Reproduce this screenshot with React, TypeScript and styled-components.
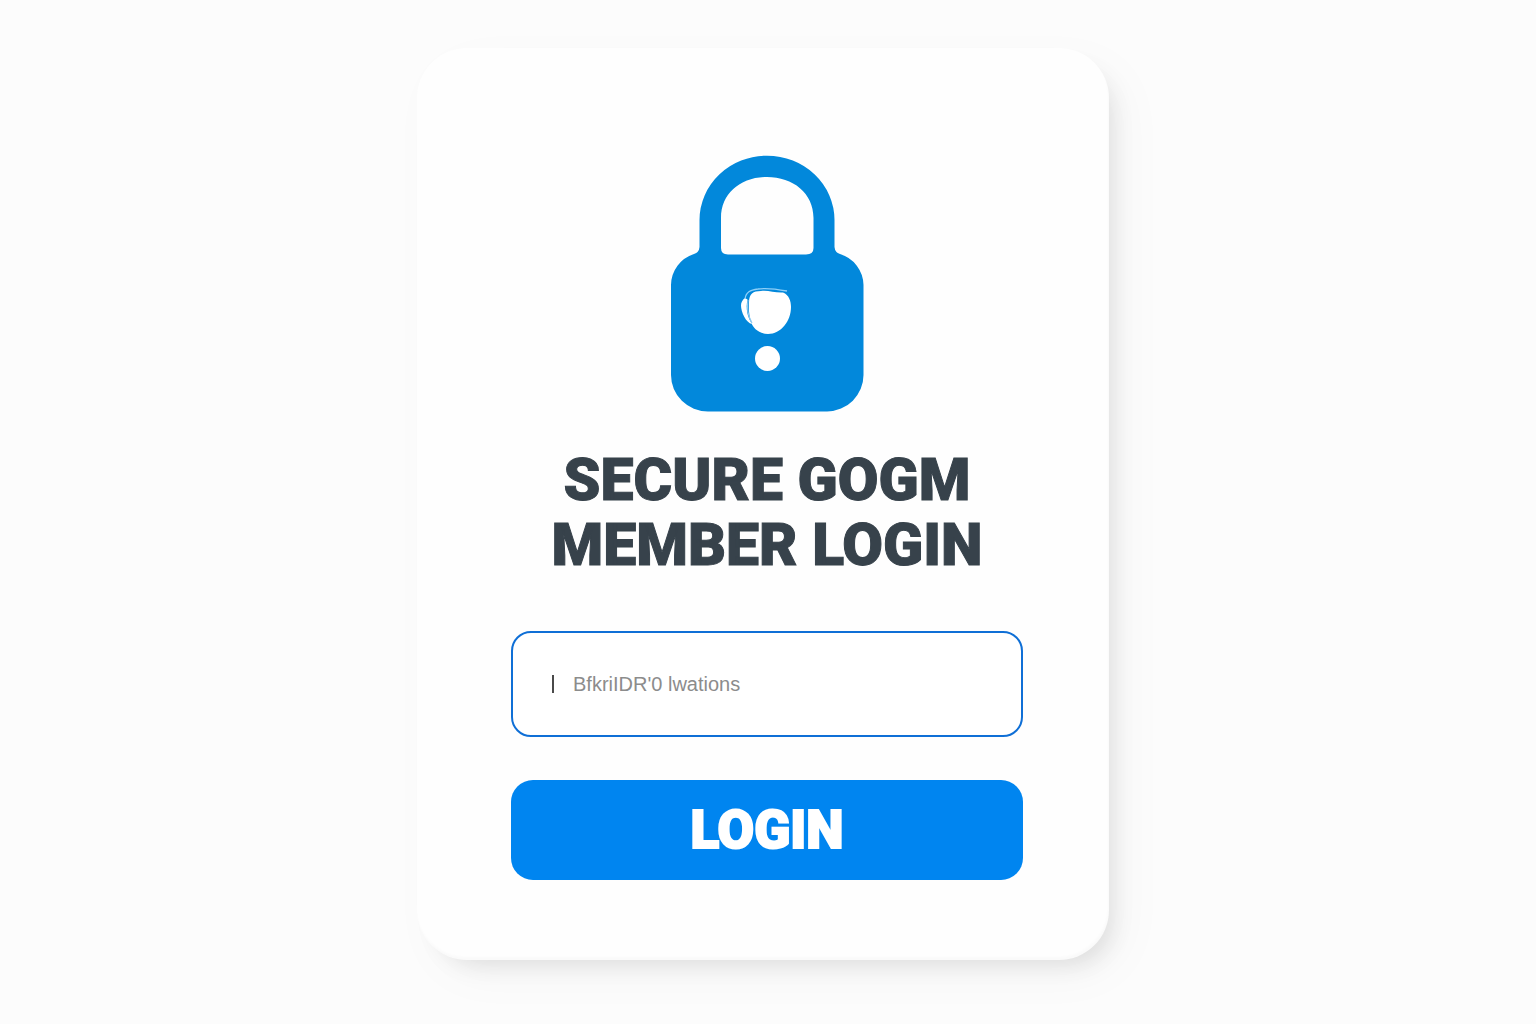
import React, { useState } from "react";
import styled, { createGlobalStyle } from "styled-components";

const GlobalStyle = createGlobalStyle`
  *, *::before, *::after { box-sizing: border-box; }
  body {
    margin: 0;
    background: #fcfcfc;
    font-family: Roboto, "Liberation Sans", sans-serif;
  }
`;

const Page = styled.main`
  min-height: 100vh;
  display: flex;
  justify-content: center;
  align-items: flex-start;
  padding: 48px 26px 64px 16px;
`;

const Card = styled.form`
  width: 100%;
  max-width: 692px;
  display: flex;
  flex-direction: column;
  align-items: center;
  padding: 107px 86px 80px 94px;
  border-radius: 50px;
  background: #fefefe;
  box-shadow:
    inset -1px -3px 3px rgba(0, 0, 0, 0.02),
    12px 14px 24px -10px rgba(0, 0, 0, 0.11),
    16px 16px 50px rgba(0, 0, 0, 0.03);
`;

const LockIcon = styled.svg`
  display: block;
  width: 194px;
  height: 258px;
`;

const Title = styled.h1`
  margin: 34px 0 0;
  color: #37424b;
  font-size: 59px;
  font-weight: 900;
  line-height: 65px;
  text-align: center;
  -webkit-text-stroke: 1px currentColor;
`;

const Field = styled.label`
  width: 100%;
  height: 106px;
  display: flex;
  align-items: center;
  gap: 19px;
  margin-top: 54px;
  padding: 0 39px;
  border: 2px solid #0f6fd6;
  border-radius: 20px;
  background: #ffffff;
`;

const Caret = styled.span`
  flex: none;
  width: 2px;
  height: 18px;
  background: #4a4a4a;
`;

const FieldInput = styled.input`
  flex: 1;
  min-width: 0;
  padding: 0;
  border: 0;
  background: transparent;
  color: #333333;
  font-family: "Liberation Sans", Arial, sans-serif;
  font-size: 20px;
  outline: none;

  &::placeholder {
    color: #8c8c8c;
    opacity: 1;
  }
`;

const LoginButton = styled.button`
  width: 100%;
  height: 100px;
  margin-top: 43px;
  padding: 0;
  border: 0;
  border-radius: 22px;
  background: #0085f0;
  color: #ffffff;
  font-family: inherit;
  font-size: 53px;
  font-weight: 900;
  -webkit-text-stroke: 2px currentColor;
  cursor: pointer;
`;

function Lock() {
  return (
    <LockIcon viewBox="670 155 194 258" aria-hidden="true">
      <path
        fill="#0288db"
        fillRule="evenodd"
        d="M699.5 220A67.500 64.300 0 0 1 834.500 220V247Q835 252.500 840 254A33 33 0 0 1 863.500 285V375A37 36.500 0 0 1 827 411.500H708A37 36.500 0 0 1 671 375V285A33 33 0 0 1 694 254Q699 252.500 699.500 247Z
           M721 218V248Q721 254.500 728 254.500H806Q813.500 254.500 813.500 248V218C813.500 193 793 177 767 177S721 193 721 218Z"
      />
      <path
        fill="#fff"
        d="M749 302C749 294 753 291 761 291C768 290 775 293 783 292.500C789 295 791 301 791 307C791 321 781 334 768 334C759 334 753 328 751 322C749 316 748.500 308 749 302Z"
      />
      <path fill="#fff" d="M745 298L747.500 299.500C745.500 309 747.500 317 752 324C746 323 741 312 741 305.500Q741 301 745 298Z" />
      <path fill="none" stroke="#8fcff8" strokeWidth="1.300" d="M745 299C746 292 750 290 758 289C768 287.500 779 289.500 787 291" />
      <path fill="none" stroke="#8bcaf2" strokeWidth="1.200" d="M748 300C746.500 309 748.500 317 752 323" />
      <circle cx="767.500" cy="358.500" r="12.500" fill="#fff" />
    </LockIcon>
  );
}

export default function App() {
  const [member, setMember] = useState("");
  return (
    <>
      <GlobalStyle />
      <Page>
        <Card onSubmit={(e) => e.preventDefault()}>
          <Lock />
          <Title>
            SECURE GOGM
            <br />
            MEMBER LOGIN
          </Title>
          <Field>
            <Caret />
            <FieldInput
              type="text"
              aria-label="Member"
              placeholder="BfkriIDR'0 lwations"
              value={member}
              onChange={(e) => setMember(e.target.value)}
            />
          </Field>
          <LoginButton type="submit">LOGIN</LoginButton>
        </Card>
      </Page>
    </>
  );
}
